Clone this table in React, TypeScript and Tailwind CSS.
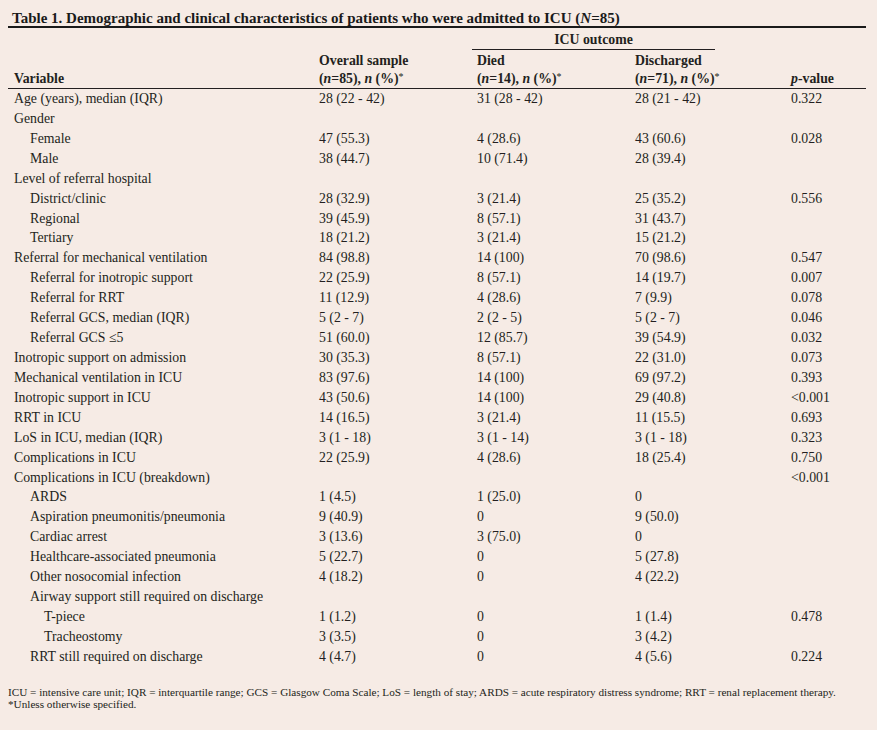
import React from "react";

type Row = {
  label: string;
  indent?: 0 | 1 | 2;
  overall?: string;
  died?: string;
  discharged?: string;
  p?: string;
};

const rows: Row[] = [
  { label: "Age (years), median (IQR)", overall: "28 (22 - 42)", died: "31 (28 - 42)", discharged: "28 (21 - 42)", p: "0.322" },
  { label: "Gender" },
  { label: "Female", indent: 1, overall: "47 (55.3)", died: "4 (28.6)", discharged: "43 (60.6)", p: "0.028" },
  { label: "Male", indent: 1, overall: "38 (44.7)", died: "10 (71.4)", discharged: "28 (39.4)" },
  { label: "Level of referral hospital" },
  { label: "District/clinic", indent: 1, overall: "28 (32.9)", died: "3 (21.4)", discharged: "25 (35.2)", p: "0.556" },
  { label: "Regional", indent: 1, overall: "39 (45.9)", died: "8 (57.1)", discharged: "31 (43.7)" },
  { label: "Tertiary", indent: 1, overall: "18 (21.2)", died: "3 (21.4)", discharged: "15 (21.2)" },
  { label: "Referral for mechanical ventilation", overall: "84 (98.8)", died: "14 (100)", discharged: "70 (98.6)", p: "0.547" },
  { label: "Referral for inotropic support", indent: 1, overall: "22 (25.9)", died: "8 (57.1)", discharged: "14 (19.7)", p: "0.007" },
  { label: "Referral for RRT", indent: 1, overall: "11 (12.9)", died: "4 (28.6)", discharged: "7 (9.9)", p: "0.078" },
  { label: "Referral GCS, median (IQR)", indent: 1, overall: "5 (2 - 7)", died: "2 (2 - 5)", discharged: "5 (2 - 7)", p: "0.046" },
  { label: "Referral GCS \u22645", indent: 1, overall: "51 (60.0)", died: "12 (85.7)", discharged: "39 (54.9)", p: "0.032" },
  { label: "Inotropic support on admission", overall: "30 (35.3)", died: "8 (57.1)", discharged: "22 (31.0)", p: "0.073" },
  { label: "Mechanical ventilation in ICU", overall: "83 (97.6)", died: "14 (100)", discharged: "69 (97.2)", p: "0.393" },
  { label: "Inotropic support in ICU", overall: "43 (50.6)", died: "14 (100)", discharged: "29 (40.8)", p: "<0.001" },
  { label: "RRT in ICU", overall: "14 (16.5)", died: "3 (21.4)", discharged: "11 (15.5)", p: "0.693" },
  { label: "LoS in ICU, median (IQR)", overall: "3 (1 - 18)", died: "3 (1 - 14)", discharged: "3 (1 - 18)", p: "0.323" },
  { label: "Complications in ICU", overall: "22 (25.9)", died: "4 (28.6)", discharged: "18 (25.4)", p: "0.750" },
  { label: "Complications in ICU (breakdown)", p: "<0.001" },
  { label: "ARDS", indent: 1, overall: "1 (4.5)", died: "1 (25.0)", discharged: "0" },
  { label: "Aspiration pneumonitis/pneumonia", indent: 1, overall: "9 (40.9)", died: "0", discharged: "9 (50.0)" },
  { label: "Cardiac arrest", indent: 1, overall: "3 (13.6)", died: "3 (75.0)", discharged: "0" },
  { label: "Healthcare-associated pneumonia", indent: 1, overall: "5 (22.7)", died: "0", discharged: "5 (27.8)" },
  { label: "Other nosocomial infection", indent: 1, overall: "4 (18.2)", died: "0", discharged: "4 (22.2)" },
  { label: "Airway support still required on discharge", indent: 1 },
  { label: "T-piece", indent: 2, overall: "1 (1.2)", died: "0", discharged: "1 (1.4)", p: "0.478" },
  { label: "Tracheostomy", indent: 2, overall: "3 (3.5)", died: "0", discharged: "3 (4.2)" },
  { label: "RRT still required on discharge", indent: 1, overall: "4 (4.7)", died: "0", discharged: "4 (5.6)", p: "0.224" },
];

const indentClass = ["pl-[6px]", "pl-[22px]", "pl-[36px]"];

function CountHeader({ n }: { n: string }) {
  return (
    <span>
      (<i>n</i>={n}), <i>n</i> (%)<sup className="-top-[3px] text-[10px] font-normal">*</sup>
    </span>
  );
}

export default function App() {
  return (
    <div
      className="min-h-[730px] w-[877px] bg-[#f6ebe5] pt-[8px] text-[#231f20]"
      style={{ fontFamily: '"Liberation Serif", "DejaVu Serif", serif' }}
    >
      <div className="ml-[8px] w-[858px]">
        {/* Title */}
        <div className="h-[18px] pl-[4px] text-[15px] font-bold leading-[20px] text-[#1a1a1a]">
          Table 1. Demographic and clinical characteristics of patients who were admitted to ICU (<i>N</i>=85)
        </div>
        <div className="h-[2px] bg-[#1a1a1a]" />

        {/* Header */}
        <div className="border-b border-[#231f20] text-[13.8px] font-bold leading-[18px]">
          <div className="flex h-[22px] items-end">
            <div className="w-[463px]" />
            <div className="ml-[1px] w-[243px] border-b border-[#231f20] text-center">ICU outcome</div>
          </div>
          <div className="flex h-[20px] items-end">
            <div className="w-[305px]" />
            <div className="w-[158px] pl-[6px]">Overall sample</div>
            <div className="w-[158px] pl-[6px]">Died</div>
            <div className="w-[156px] pl-[6px]">Discharged</div>
          </div>
          <div className="flex h-[18px] items-end">
            <div className="w-[305px] pl-[6px]">Variable</div>
            <div className="w-[158px] pl-[6px]">
              <CountHeader n="85" />
            </div>
            <div className="w-[158px] pl-[6px]">
              <CountHeader n="14" />
            </div>
            <div className="w-[156px] pl-[6px]">
              <CountHeader n="71" />
            </div>
            <div className="flex-1 pl-[6px]">
              <i>p</i>-value
            </div>
          </div>
        </div>

        {/* Body */}
        <div className="text-[13.8px] leading-[19.93px]">
          {rows.map((r, i) => (
            <div key={i} className="flex h-[19.93px]">
              <div className={`w-[305px] ${indentClass[r.indent ?? 0]}`}>{r.label}</div>
              <div className="w-[158px] pl-[6px]">{r.overall}</div>
              <div className="w-[158px] pl-[6px]">{r.died}</div>
              <div className="w-[156px] pl-[6px]">{r.discharged}</div>
              <div className="flex-1 pl-[6px]">{r.p}</div>
            </div>
          ))}
        </div>

        {/* Footnote */}
        <div className="mt-[19px] text-[11.2px] leading-[12px]">
          <div>
            ICU = intensive care unit; IQR = interquartile range; GCS = Glasgow Coma Scale; LoS = length of stay; ARDS =
            acute respiratory distress syndrome; RRT = renal replacement therapy.
          </div>
          <div>*Unless otherwise specified.</div>
        </div>
      </div>
    </div>
  );
}
